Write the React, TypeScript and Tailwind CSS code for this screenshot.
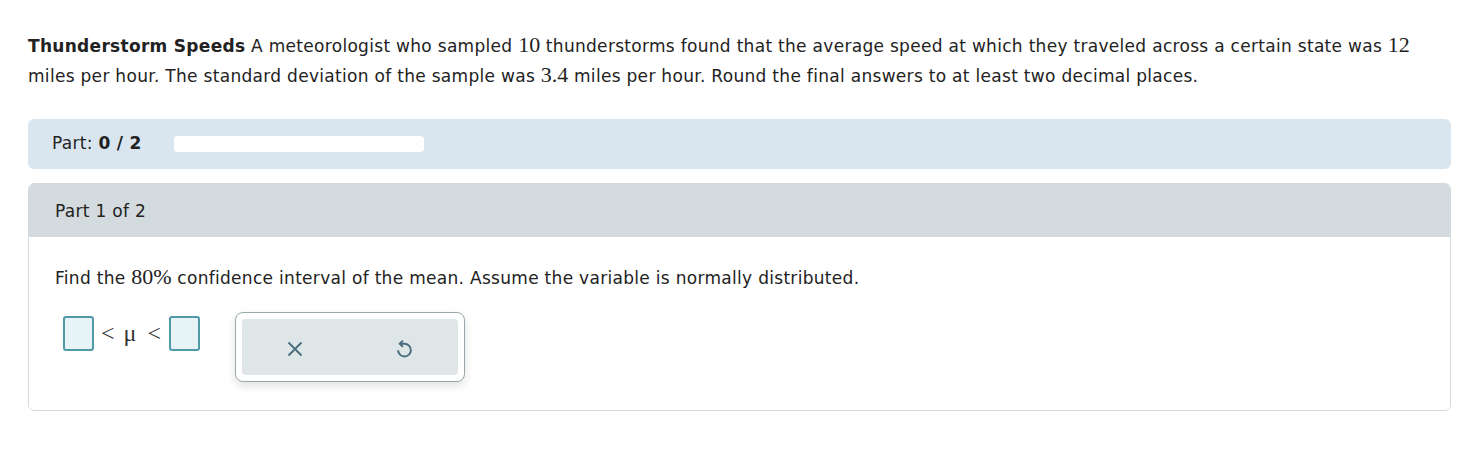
import React from 'react'

function M(props: { children: React.ReactNode }) {
  return <span className="font-['Liberation_Serif',serif] text-[22px] leading-[0] tracking-normal">{props.children}</span>
}

function AnswerBox() {
  return <span className="inline-block w-[31px] h-[35px] rounded-[3px] border-2 border-[#4f9aa6] bg-[#e6f4f8]" />
}

export default function App() {
  return (
    <div className="bg-white min-h-[456px] w-[1475px] px-[28px] pt-[31px] font-['DejaVu_Sans',Verdana,sans-serif] text-[17px] tracking-[0.3px] text-[#222]">
      <p className="leading-[30px] pr-[20px]">
        <span className="font-bold">Thunderstorm Speeds</span> A meteorologist who sampled <M>10</M> thunderstorms found that the average speed at which they traveled across a certain state was <M>12</M> miles per hour. The standard deviation of the sample was <M>3.4</M> miles per hour. Round the final answers to at least two decimal places.
      </p>

      <div className="mt-[28px] w-[1423px] h-[50px] rounded-[6px] bg-[#dae6ef] flex items-center pl-[24px]">
        <span>Part: <span className="font-bold">0 / 2</span></span>
        <div className="ml-[32px] w-[250px] h-[16px] rounded-[4px] bg-white" />
      </div>

      <div className="mt-[14px] w-[1423px] rounded-[6px] border border-[#d3dbde] overflow-hidden">
        <div className="h-[53px] bg-[#d3dbde] flex items-center pl-[26px] pt-[2px]">Part 1 of 2</div>
        <div className="bg-white pl-[26px] pt-[28px] pb-[28px]">
          <div className="leading-[26px]">
            Find the <M>80%</M> confidence interval of the mean. Assume the variable is normally distributed.
          </div>
          <div className="mt-[21px] flex items-start">
            <div className="ml-[8px] mt-[3px] flex items-center font-['Liberation_Serif',serif] text-[24px] tracking-normal text-[#333]">
              <AnswerBox />
              <span className="ml-[7px]">&lt;</span>
              <span className="ml-[9px]">μ</span>
              <span className="ml-[11px]">&lt;</span>
              <span className="ml-[8px] flex"><AnswerBox /></span>
            </div>
            <div className="ml-[35px] w-[230px] h-[70px] rounded-[8px] border border-[#9aa8ae] bg-white p-[6px] shadow-[0_4px_10px_rgba(0,0,0,0.12)]">
              <div className="h-full rounded-[4px] bg-[#dfe6e8] flex items-center text-[#466e7a]">
                <svg className="ml-[45px] mt-[3px]" width="16" height="16" viewBox="0 0 16 16" fill="none" stroke="currentColor" strokeWidth="1.8">
                  <path d="M1.5 1.5l13 13M14.5 1.5l-13 13" />
                </svg>
                <svg className="ml-[93px] mt-[1px]" width="17" height="22" viewBox="0 0 16 20" fill="none" stroke="currentColor" strokeWidth="1.8">
                  <path d="M6.5 3L3.5 6l3 3" />
                  <path d="M3.5 6H8A6 6 0 1 1 2 12" />
                </svg>
              </div>
            </div>
          </div>
        </div>
      </div>
    </div>
  )
}
